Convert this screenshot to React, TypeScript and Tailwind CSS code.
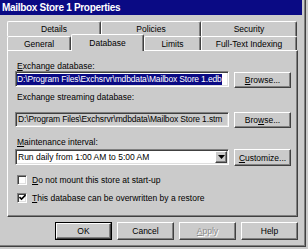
const raised =
  'border border-t-white border-l-white border-r-[#404040] border-b-[#404040] shadow-[inset_-1px_-1px_0_#808080]';
const sunken =
  'border border-t-[#808080] border-l-[#808080] border-r-white border-b-white shadow-[inset_1px_1px_0_#404040,inset_-1px_-1px_0_#dfdfdf]';

function Btn({ children, w = 'w-[57px]', h = 'h-[16px]', extra = '', disabled = false }: any) {
  return (
    <div
      className={`${w} ${h} ${raised} ${extra} flex items-center justify-center leading-[10px] ${
        disabled ? 'text-[#8a8a8a] [text-shadow:1px_1px_0_#ffffff]' : ''
      }`}
    >
      {children}
    </div>
  );
}

function Check({ checked }: { checked?: boolean }) {
  return (
    <div className={`w-[10px] h-[10px] bg-white ${sunken} flex items-center justify-center shrink-0`}>
      {checked && (
        <svg width="7" height="7" viewBox="0 0 7 7">
          <path d="M0.5 3 L2.5 5 L6.5 1" fill="none" stroke="#000" strokeWidth="1.6" />
        </svg>
      )}
    </div>
  );
}

function Tab({ label, w, selected, h = 'h-[14px]' }: any) {
  return (
    <div
      className={`${w} ${selected ? 'h-[17px] -mt-[2px] relative z-10 bg-[#cbcbcb]' : h} flex ${
        selected ? 'items-start pt-[3px]' : 'items-center'
      } justify-center border-t border-l border-r border-t-white border-l-white border-r-[#404040] shadow-[inset_-1px_0_0_#808080] rounded-t-[2px] leading-[10px]`}
    >
      {label}
    </div>
  );
}

export default function App() {
  return (
    <div className="w-[308px] h-[249px] bg-[#cbcbcb] font-['Liberation_Sans',Arial,sans-serif] text-[8.5px] text-black overflow-hidden">
      <div className="w-[306px] h-[247px] border-r border-b border-r-[#404040] border-b-[#404040] shadow-[inset_-1px_-1px_0_#808080]">
        {/* title bar */}
        <div className="w-[302px] h-[15px] bg-[#0a0a84] text-white font-bold text-[10px] leading-[15px] pl-[2px] tracking-[-0.3px]">
          Mailbox Store 1 Properties
        </div>

        {/* tabs */}
        <div className="mt-[6px] ml-[7px] flex">
          <Tab label="Details" w="w-[94px]" h="h-[15px]" />
          <Tab label="Policies" w="w-[100px]" h="h-[15px]" />
          <Tab label="Security" w="w-[96px]" h="h-[15px]" />
        </div>
        <div className="ml-[7px] flex items-start h-[14px]">
          <Tab label="General" w="w-[64px]" />
          <Tab label="Database" w="w-[73px]" selected />
          <Tab label="Limits" w="w-[57px]" />
          <Tab label="Full-Text Indexing" w="w-[96px]" />
        </div>

        {/* panel */}
        <div className="ml-[7px] w-[291px] h-[167px] border-t border-l border-r border-b border-t-white border-l-white border-r-[#404040] border-b-[#404040] shadow-[inset_-1px_-1px_0_#808080] pl-[7px]">
          <div className="mt-[10px] pl-[2px] leading-[10px]">
            <span className="underline">E</span>xchange database:
          </div>
          <div className="flex items-start gap-[5px]">
            <div className={`w-[214px] h-[16px] bg-white ${sunken} pl-[1px] flex items-center overflow-hidden`}>
              <span className="bg-[#0a0a84] text-white leading-[11px] whitespace-nowrap tracking-[-0.15px]">
                D:\Program Files\Exchsrvr\mdbdata\Mailbox Store 1.edb
              </span>
            </div>
            <Btn extra="mt-[1px]">
              <span>
                <span className="underline">B</span>rowse...
              </span>
            </Btn>
          </div>

          <div className="mt-[4px] pl-[2px] leading-[10px]">Exchange streaming database:</div>
          <div className="mt-[10px] flex items-start gap-[5px]">
            <div className={`w-[214px] h-[15px] ${sunken} pl-[2px] flex items-center whitespace-nowrap leading-[11px] tracking-[-0.15px] overflow-hidden`}>
              D:\Program Files\Exchsrvr\mdbdata\Mailbox Store 1.stm
            </div>
            <Btn>
              <span>
                Bro<span className="underline">w</span>se...
              </span>
            </Btn>
          </div>

          <div className="mt-[9px] pl-[2px] leading-[10px]">
            <span className="underline">M</span>aintenance interval:
          </div>
          <div className="mt-[2px] flex items-start gap-[5px]">
            <div className={`w-[214px] h-[16px] bg-white ${sunken} pl-[2px] pr-[1px] flex items-center`}>
              <span className="flex-1 leading-[11px] whitespace-nowrap">Run daily from 1:00 AM to 5:00 AM</span>
              <div className={`w-[12px] h-[12px] bg-[#cbcbcb] ${raised} flex items-center justify-center`}>
                <svg width="7" height="4" viewBox="0 0 7 4">
                  <polygon points="0,0 7,0 3.5,4" fill="#000" />
                </svg>
              </div>
            </div>
            <Btn h="h-[17px]">
              <span>
                <span className="underline">C</span>ustomize...
              </span>
            </Btn>
          </div>

          <div className="mt-[8px] h-[11px] pl-[2px] flex items-center gap-[5px] leading-[10px]">
            <Check />
            <span>
              <span className="underline">D</span>o not mount this store at start-up
            </span>
          </div>
          <div className="mt-[7px] h-[11px] pl-[2px] flex items-center gap-[5px] leading-[10px]">
            <Check checked />
            <span>
              <span className="underline">T</span>his database can be overwritten by a restore
            </span>
          </div>
        </div>

        {/* dialog buttons */}
        <div className="mt-[5px] w-[298px] flex justify-end gap-[5px]">
          <div className="w-[57px] h-[18px] border border-black">
            <div className={`w-full h-full ${raised} flex items-center justify-center leading-[10px]`}>OK</div>
          </div>
          <Btn h="h-[18px]">Cancel</Btn>
          <Btn h="h-[18px]" disabled>
            <span>
              <span className="underline">A</span>pply
            </span>
          </Btn>
          <Btn h="h-[18px]">Help</Btn>
        </div>
      </div>
    </div>
  );
}
